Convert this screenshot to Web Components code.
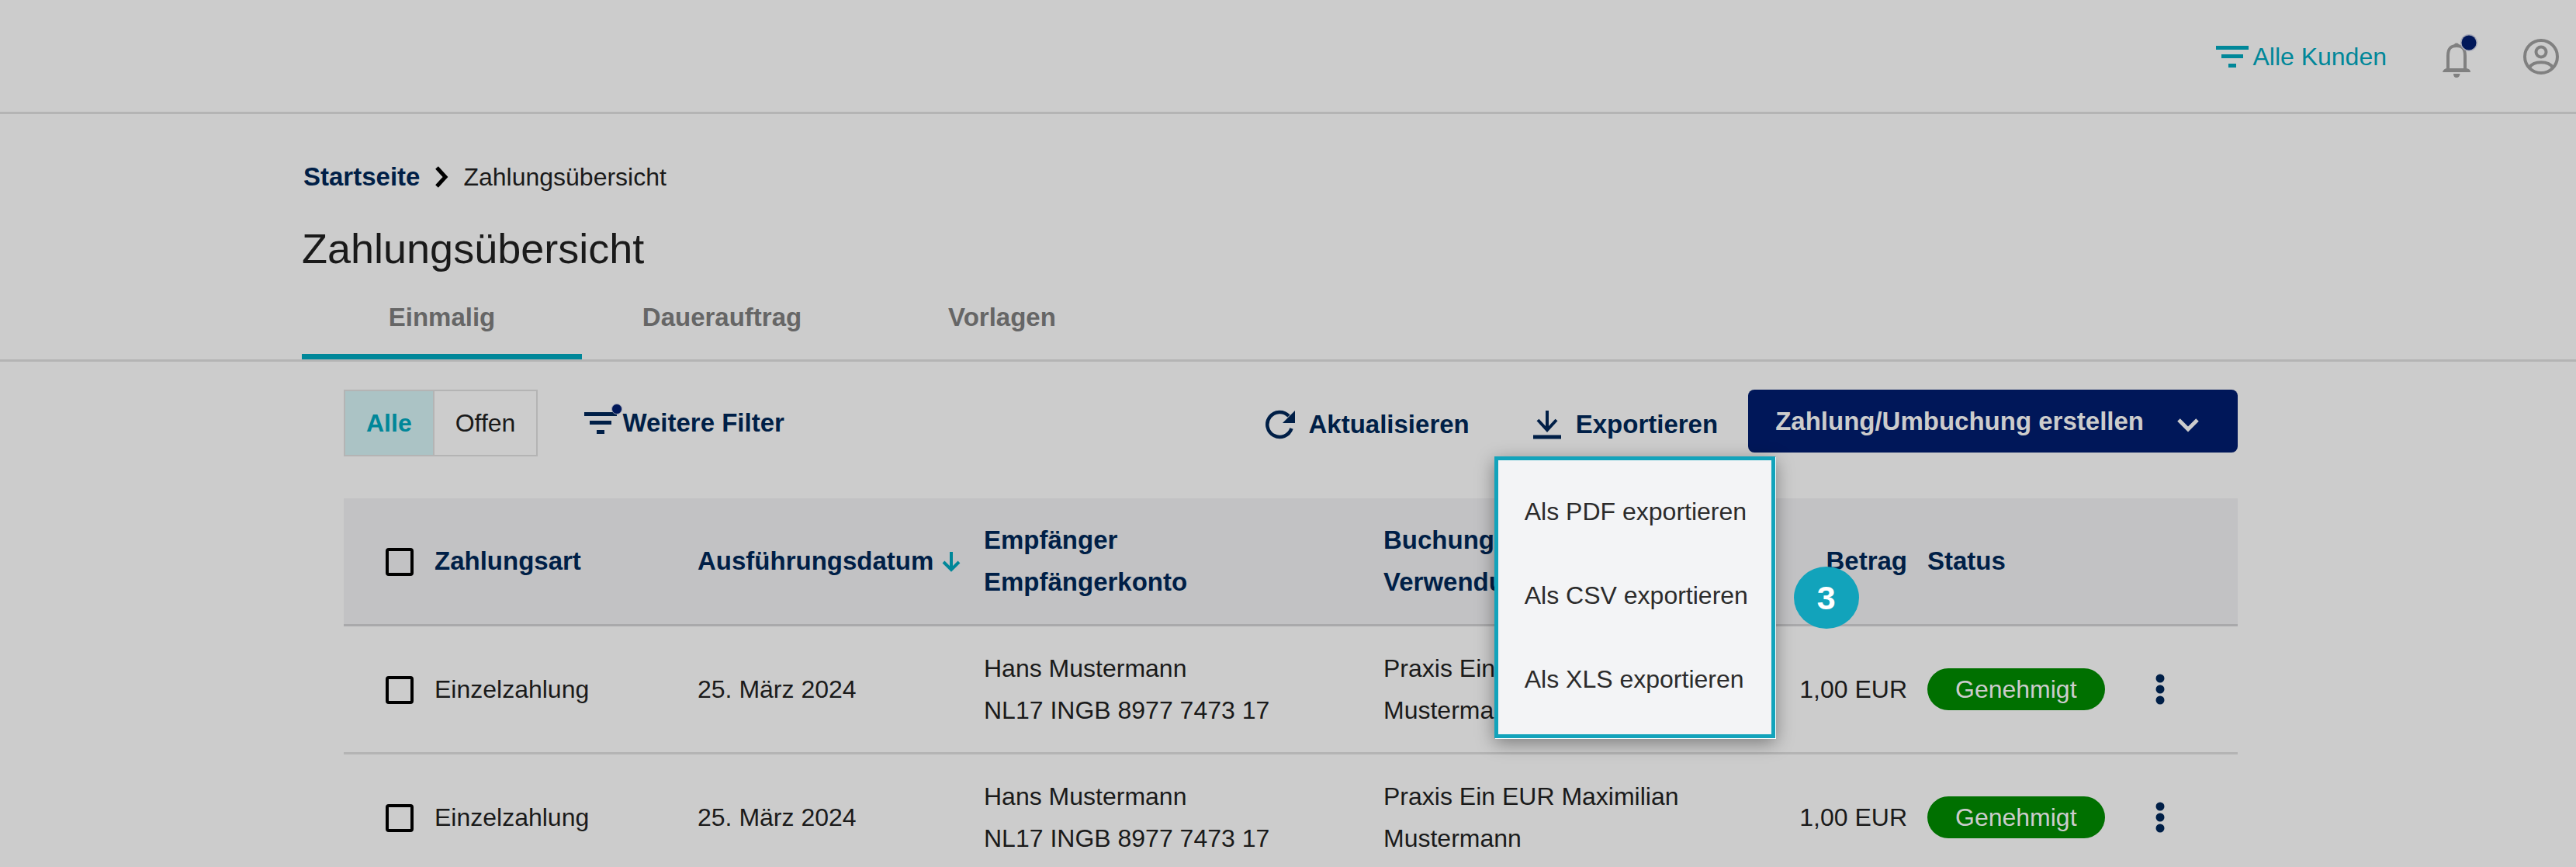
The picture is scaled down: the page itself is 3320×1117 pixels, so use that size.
<!DOCTYPE html>
<html lang="de">
<head>
	<meta charset="utf-8">
	<title>Zahlungsübersicht</title>
	<style>
		:root {
			--page: #ccc;
			--line: #b4b4b4;
			--text: #1a1a1a;
			--navy: #001f47;
			--primary: #001759;
			--teal: #008799;
			--accent: #12a3bb;
		}
		html, body { height: 100%; }
		body {
			margin: 0;
			overflow: hidden;
			background-color: var(--page);
			color: var(--text);
			font: 32px/54px "Liberation Sans", Arial, sans-serif;
		}
	</style>
</head>
<body>
	<app-header></app-header>
	<page-head></page-head>
	<payments-panel></payments-panel>

	<template id="appHeader">
		<a class="customers" href="#kunden"><filter-icon></filter-icon>Alle Kunden</a>
		<button class="bell" aria-label="Benachrichtigungen">
			<svg width="46" height="58" viewBox="0 0 46 58">
				<path d="M7 45V28C7 18 11 15 18 15S29 18 29 28V45" fill="none" stroke="#808080" stroke-width="4"/>
				<path d="M14 16C14 10 22 10 22 16ZM0 49Q1 45 5 44H31Q36 45 36 49ZM14 51H22.500Q22 56 18 56Q14 56 14 51Z" fill="#808080"/>
				<circle cx="34" cy="11" r="11" fill="#a5a9b8"/>
				<circle cx="34" cy="11" r="9.500" fill="#001759"/>
			</svg>
		</button>
		<button aria-label="Profil">
			<svg width="46" height="46" viewBox="0 0 46 46" fill="none" stroke="#808080" stroke-width="4">
				<circle cx="23" cy="23" r="21"/>
				<circle cx="23" cy="17" r="6.500"/>
				<path d="M8 37C13 28 33 28 38 37"/>
			</svg>
		</button>
		<style>
			:host {
				display: flex;
				justify-content: flex-end;
				align-items: center;
				box-sizing: border-box;
				height: 147px;
				padding: 2px 22px 0 0;
				border-bottom: 3px solid var(--line);
			}
			.customers {
				display: flex;
				align-items: center;
				gap: 5px;
				color: var(--teal);
				text-decoration: none;
			}
			button {
				display: flex;
				padding: 0;
				border: 0;
				background: none;
			}
			button.bell { margin: 0 58px 0 72px; }
		</style>
	</template>

	<template id="filterIcon">
		<svg width="42" height="28" viewBox="0 0 42 28" fill="currentColor">
			<path d="M0 0H42V5H0ZM7 11H35V16H7ZM16 23H26V28H16Z"/>
		</svg>
		<span></span>
		<style>
			:host { display: inline-flex; position: relative; }
			span { display: none; }
			:host([dot]) span {
				display: block;
				position: absolute;
				top: -11px;
				right: -7px;
				width: 12px;
				height: 12px;
				border: 1px solid #9a9eb0;
				border-radius: 50%;
				background-color: var(--primary);
			}
		</style>
	</template>

	<template id="pageHead">
		<div class="inner">
			<nav class="crumbs" aria-label="Brotkrumen">
				<a href="#start">Startseite</a>
				<svg width="18" height="28" viewBox="0 0 18 28" fill="none" stroke="#000" stroke-width="5"><path d="M3 2L14 14L3 26"/></svg>
				<span>Zahlungsübersicht</span>
			</nav>
			<h1>Zahlungsübersicht</h1>
		</div>
		<nav class="tabs" aria-label="Zahlungen">
			<div class="inner">
				<a class="active" href="#einmalig">Einmalig</a>
				<a href="#dauerauftrag">Dauerauftrag</a>
				<a href="#vorlagen">Vorlagen</a>
			</div>
		</nav>
		<style>
			:host { display: block; padding-top: 54px; }
			.inner { max-width: 2542px; margin: 0 auto; }
			.crumbs {
				display: flex;
				align-items: center;
				gap: 19px;
				padding-left: 2px;
			}
			.crumbs a {
				color: var(--navy);
				font-size: 33px;
				font-weight: bold;
				text-decoration: none;
			}
			h1 {
				margin: 29px 0 26px;
				font-size: 54px;
				font-weight: normal;
				line-height: 72px;
			}
			.tabs { border-bottom: 3px solid var(--line); }
			.tabs .inner {
				display: grid;
				grid-template-columns: repeat(3, 361px);
			}
			.tabs a {
				padding-bottom: 20px;
				border-bottom: 7px solid transparent;
				color: #666;
				font-size: 33px;
				font-weight: bold;
				text-align: center;
				text-decoration: none;
			}
			.tabs a.active { border-bottom-color: var(--teal); }
		</style>
	</template>

	<template id="filterToggle">
		<button class="on" aria-pressed="true">Alle</button>
		<button aria-pressed="false">Offen</button>
		<style>
			:host { display: inline-flex; border: 2px solid var(--line); }
			button {
				height: 82px;
				padding: 0 27px;
				border: 0;
				background: none;
				color: var(--text);
				font: inherit;
			}
			button.on {
				border-right: 2px solid var(--line);
				background-color: #abc3c5;
				color: var(--teal);
				font-weight: bold;
			}
		</style>
	</template>

	<template id="toolButton">
		<button><slot name="icon"></slot><slot></slot></button>
		<slot name="menu"></slot>
		<style>
			:host { display: block; position: relative; }
			button {
				display: flex;
				align-items: center;
				gap: var(--gap, 18px);
				padding: 0;
				border: 0;
				background: none;
				color: var(--navy);
				font: bold 33px/54px "Liberation Sans", Arial, sans-serif;
			}
		</style>
	</template>

	<template id="exportMenu">
		<button role="menuitem">Als PDF exportieren</button>
		<button role="menuitem">Als CSV exportieren</button>
		<button role="menuitem">Als XLS exportieren</button>
		<span class="step">3</span>
		<style>
			:host {
				display: block;
				position: absolute;
				top: calc(100% + 14px);
				left: -49px;
				z-index: 1;
				box-sizing: border-box;
				width: 362px;
				padding: 12px 0 17px;
				border: 5px solid var(--accent);
				background-color: #f3f4f6;
				box-shadow: 1px 1px 0 #fff, 0 6px 22px rgba(0, 0, 0, .4);
			}
			button {
				display: block;
				width: 100%;
				height: 108px;
				padding: 0 34px;
				border: 0;
				background: none;
				color: #2b2b2b;
				font: inherit;
				text-align: left;
				white-space: nowrap;
			}
			.step {
				position: absolute;
				top: 137px;
				left: 381px;
				width: 84px;
				height: 80px;
				border-radius: 50%;
				background-color: var(--accent);
				color: #fff;
				font: bold 43px/80px "Liberation Sans", Arial, sans-serif;
				text-align: center;
			}
		</style>
	</template>

	<template id="paymentsPanel">
		<div class="toolbar">
			<filter-toggle></filter-toggle>
			<tool-button class="more"><filter-icon slot="icon" dot></filter-icon>Weitere Filter</tool-button>
			<div class="actions">
				<tool-button>
					<svg slot="icon" width="38" height="38" viewBox="0 0 38 38">
						<path d="M33.500 24A16 16 0 1 1 30 8" fill="none" stroke="#001f47" stroke-width="4.500"/>
						<path d="M38 1V17H22Z" fill="#001f47"/>
					</svg>
					Aktualisieren
				</tool-button>
				<tool-button>
					<svg slot="icon" width="38" height="38" viewBox="0 0 38 38" fill="none" stroke="#001f47">
						<path d="M19 1V26M7 13L19 26L31 13" stroke-width="4"/>
						<path d="M1 35H37" stroke-width="5"/>
					</svg>
					Exportieren
					<export-menu slot="menu" role="menu"></export-menu>
				</tool-button>
			</div>
			<button class="create">
				Zahlung/Umbuchung erstellen
				<svg width="28" height="18" viewBox="0 0 28 18" fill="none" stroke="currentColor" stroke-width="5"><path d="M2 2L14 14L26 2"/></svg>
			</button>
		</div>
		<payments-table></payments-table>
		<style>
			:host {
				display: block;
				box-sizing: border-box;
				max-width: 2542px;
				margin: 0 auto;
				padding: 36px 47px 0 54px;
			}
			.toolbar {
				display: flex;
				align-items: center;
				margin-bottom: 54px;
			}
			.more { --gap: 7px; margin-left: 60px; }
			.actions {
				display: flex;
				gap: 81px;
				margin: 0 39px 0 auto;
				padding-top: 4px;
			}
			.create {
				display: flex;
				align-items: center;
				align-self: flex-start;
				gap: 43px;
				height: 81px;
				padding: 0 50px 0 35px;
				border: 0;
				border-radius: 8px;
				background-color: var(--primary);
				color: #ccc;
				font: bold 33px/54px "Liberation Sans", Arial, sans-serif;
			}
			.create svg { margin-top: 10px; }
		</style>
	</template>

	<template id="statusPill">
		<slot></slot>
		<style>
			:host {
				display: inline-block;
				padding: 0 36px;
				border-radius: 27px;
				background-color: #007000;
				color: #ccc;
				vertical-align: top;
			}
		</style>
	</template>

	<template id="paymentsTable">
		<table>
			<colgroup>
				<col class="check"><col class="type"><col class="date"><col class="payee">
				<col class="purpose"><col class="amount"><col class="status"><col>
			</colgroup>
			<thead>
				<tr>
					<th class="check"><input type="checkbox" aria-label="Alle auswählen"></th>
					<th>Zahlungsart</th>
					<th>Ausführungsdatum
						<svg width="24" height="26" viewBox="0 0 24 26" fill="none" stroke="#008799" stroke-width="4"><path d="M12 0V22M2 13L12 23L22 13"/></svg>
					</th>
					<th>Empfänger<br>Empfängerkonto</th>
					<th>Buchungstext<br>Verwendungszweck</th>
					<th class="amount">Betrag</th>
					<th class="status">Status</th>
					<th></th>
				</tr>
			</thead>
			<tbody></tbody>
		</table>
		<style>
			:host { display: block; }
			table {
				width: 100%;
				border-collapse: separate;
				border-spacing: 0;
				table-layout: fixed;
			}
			col.check { width: 117px; }
			col.type { width: 339px; }
			col.date { width: 369px; }
			col.payee { width: 515px; }
			col.purpose { width: 429px; }
			col.amount { width: 246px; }
			col.status { width: 300px; }
			th, td {
				padding: 27px 0;
				border-bottom: 3px solid var(--line);
				text-align: left;
			}
			th {
				border-bottom-color: #a9a9ab;
				background-color: #c2c2c4;
				color: var(--navy);
				font-size: 33px;
				white-space: nowrap;
			}
			th svg { margin-left: 2px; vertical-align: -3px; }
			.check { padding-left: 54px; }
			.amount { text-align: right; }
			.status { padding-left: 26px; }
			input {
				display: block;
				appearance: none;
				width: 36px;
				height: 36px;
				margin: 2px 0 0;
				border: 4px solid #000;
				border-radius: 4px;
			}
			button {
				display: flex;
				padding: 0 20px;
				border: 0;
				background: none;
			}
		</style>
	</template>

	<script>
		// payments listed in the table
		const payments = [
			{ type: 'Einzelzahlung', date: '25. März 2024', name: 'Hans Mustermann', iban: 'NL17 INGB 8977 7473 17', purpose: 'Praxis Ein EUR Maximilian Mustermann', amount: '1,00 EUR', status: 'Genehmigt' },
			{ type: 'Einzelzahlung', date: '25. März 2024', name: 'Hans Mustermann', iban: 'NL17 INGB 8977 7473 17', purpose: 'Praxis Ein EUR Maximilian Mustermann', amount: '1,00 EUR', status: 'Genehmigt' }
		];

		class TemplateElement extends HTMLElement {
			constructor(template) {
				super();
				this.attachShadow({ mode: 'open' });
				this.shadowRoot.append(template.content.cloneNode(true));
			}
		}

		customElements.define('filter-icon', class extends TemplateElement {
			constructor() { super(filterIcon); }
		});

		customElements.define('app-header', class extends TemplateElement {
			constructor() { super(appHeader); }
		});

		customElements.define('page-head', class extends TemplateElement {
			constructor() { super(pageHead); }
		});

		customElements.define('filter-toggle', class extends TemplateElement {
			constructor() { super(filterToggle); }
		});

		customElements.define('tool-button', class extends TemplateElement {
			constructor() { super(toolButton); }
		});

		customElements.define('export-menu', class extends TemplateElement {
			constructor() { super(exportMenu); }
		});

		customElements.define('status-pill', class extends TemplateElement {
			constructor() { super(statusPill); }
		});

		customElements.define('payments-table', class extends TemplateElement {
			constructor() {
				super(paymentsTable);
				this.shadowRoot.querySelector('tbody').innerHTML = payments.map(p => `
					<tr>
						<td class="check"><input type="checkbox" aria-label="Zahlung auswählen"></td>
						<td>${p.type}</td>
						<td>${p.date}</td>
						<td>${p.name}<br>${p.iban}</td>
						<td>${p.purpose}</td>
						<td class="amount">${p.amount}</td>
						<td class="status"><status-pill>${p.status}</status-pill></td>
						<td>
							<button aria-label="Aktionen">
								<svg width="12" height="40" viewBox="0 0 12 40" fill="#001f47">
									<circle cx="6" cy="6" r="5.500"/><circle cx="6" cy="20" r="5.500"/><circle cx="6" cy="34" r="5.500"/>
								</svg>
							</button>
						</td>
					</tr>`).join('');
			}
		});

		customElements.define('payments-panel', class extends TemplateElement {
			constructor() { super(paymentsPanel); }
		});
	</script>
</body>
</html>
